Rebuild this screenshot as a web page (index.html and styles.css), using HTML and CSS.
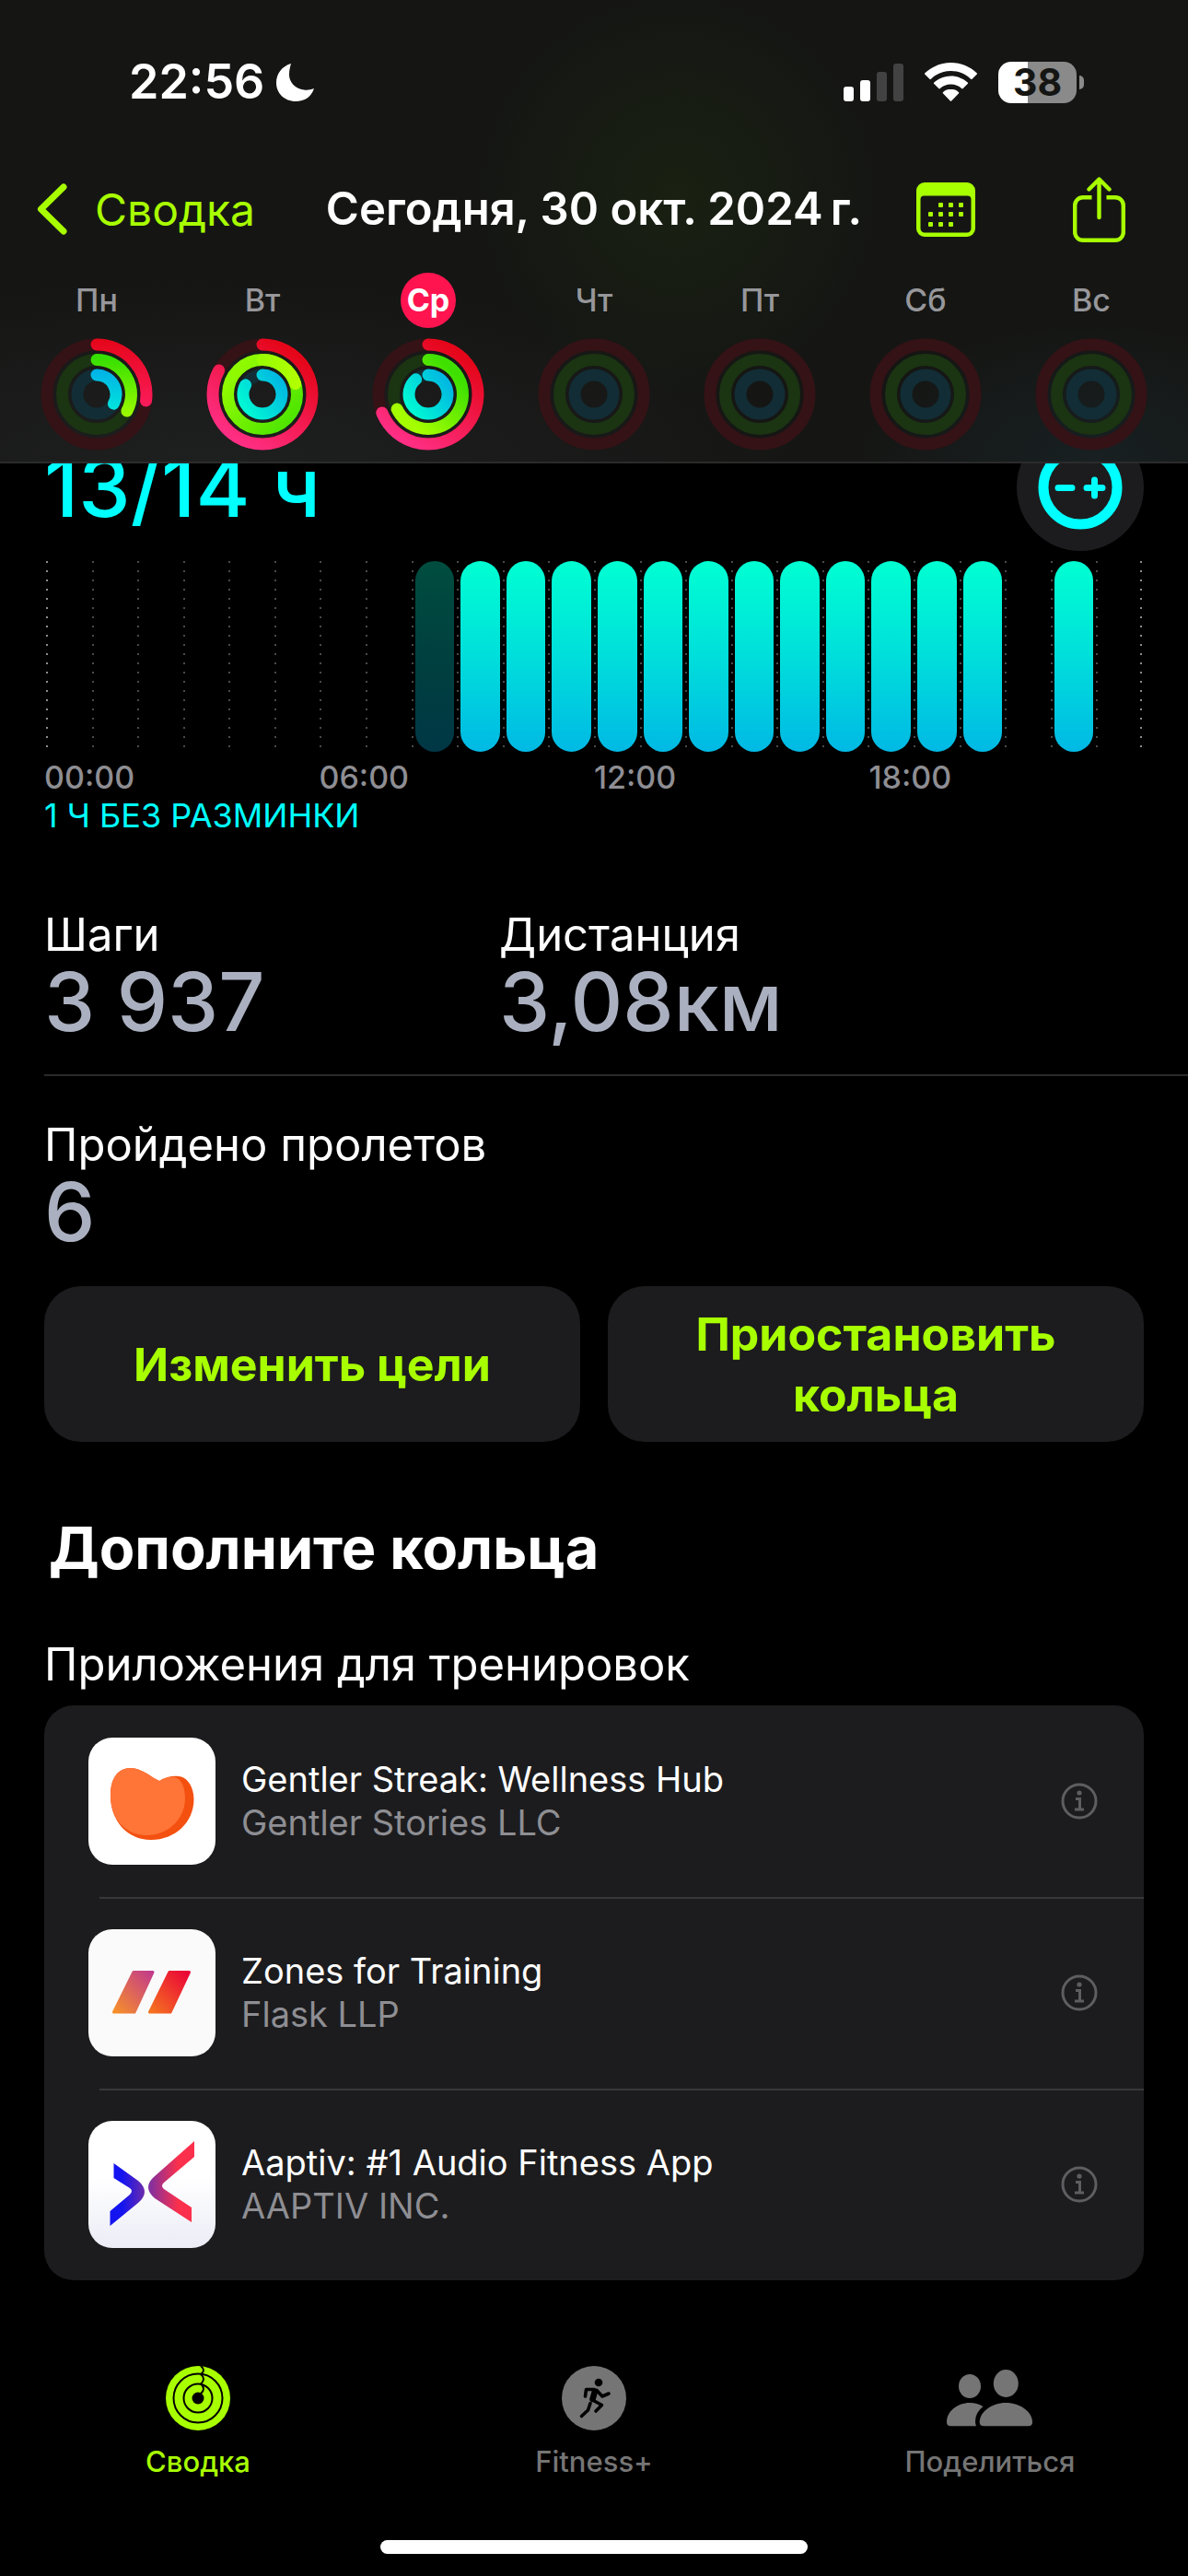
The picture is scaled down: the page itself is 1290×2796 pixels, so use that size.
FILE: index.html
```html
<!DOCTYPE html>
<html lang="ru">
<head>
<meta charset="utf-8">
<meta name="viewport" content="width=device-width, initial-scale=1">
<title>Сводка</title>
<link rel="stylesheet" href="styles.css">
</head>
<body>

<!-- Shared gradients and ring shapes -->
<svg class="defs" aria-hidden="true">
  <defs>
    <linearGradient id="move" gradientUnits="userSpaceOnUse" x1="25" y1="-50" x2="-40" y2="45">
      <stop offset="0" stop-color="#e5061a"/><stop offset="1" stop-color="#ff2f86"/>
    </linearGradient>
    <linearGradient id="move-short" gradientUnits="userSpaceOnUse" x1="0" y1="-60" x2="0" y2="14">
      <stop offset="0" stop-color="#e5061a"/><stop offset="1" stop-color="#fb1c5c"/>
    </linearGradient>
    <linearGradient id="exercise" gradientUnits="userSpaceOnUse" x1="20" y1="-30" x2="-30" y2="20">
      <stop offset="0" stop-color="#3fe000"/><stop offset="1" stop-color="#a6ff00"/>
    </linearGradient>
    <linearGradient id="exercise-short" gradientUnits="userSpaceOnUse" x1="0" y1="-40" x2="0" y2="24">
      <stop offset="0" stop-color="#36df00"/><stop offset="1" stop-color="#9dfb00"/>
    </linearGradient>
    <linearGradient id="exercise-lap" gradientUnits="userSpaceOnUse" x1="30" y1="30" x2="-30" y2="-20">
      <stop offset="0" stop-color="#4fe500"/><stop offset="1" stop-color="#8ff900"/>
    </linearGradient>
    <linearGradient id="exercise-over" gradientUnits="userSpaceOnUse" x1="0" y1="0" x2="38" y2="0">
      <stop offset="0" stop-color="#99fb00"/><stop offset="1" stop-color="#b2ff00"/>
    </linearGradient>
    <linearGradient id="stand" gradientUnits="userSpaceOnUse" x1="18" y1="-18" x2="-22" y2="10">
      <stop offset="0" stop-color="#00b8e2"/><stop offset="1" stop-color="#00f6d4"/>
    </linearGradient>
    <linearGradient id="stand-short" gradientUnits="userSpaceOnUse" x1="0" y1="-26" x2="0" y2="16">
      <stop offset="0" stop-color="#00b2e6"/><stop offset="1" stop-color="#00e3dc"/>
    </linearGradient>
    <linearGradient id="stripe-a" x1="1" y1="0" x2="0" y2="1">
      <stop offset="0" stop-color="#c23a8c"/><stop offset="1" stop-color="#f79028"/>
    </linearGradient>
    <linearGradient id="stripe-b" x1="1" y1="0" x2="0" y2="1">
      <stop offset="0" stop-color="#ea0238"/><stop offset="1" stop-color="#f5741f"/>
    </linearGradient>
    <linearGradient id="wing-a" x1="0" y1="0" x2="1" y2="0">
      <stop offset=".35" stop-color="#1414f0"/><stop offset="1" stop-color="#6b2cab"/>
    </linearGradient>
    <linearGradient id="wing-b" x1="0" y1="0" x2="1" y2="0">
      <stop offset="0" stop-color="#7a30a4"/><stop offset=".65" stop-color="#fb304c"/>
    </linearGradient>
    <path id="ring-l" d="M0-54A54 54 0 1 1-.01-54" pathLength="100"/>
    <path id="ring-m" d="M0-37.5A37.5 37.5 0 1 1-.01-37.5" pathLength="100"/>
    <path id="ring-s" d="M0-21A21 21 0 1 1-.01-21" pathLength="100"/>
    <g id="tracks">
      <circle r="54" stroke="#341216"/><circle r="37.5" stroke="#1b3412"/><circle r="21" stroke="#122d35"/>
    </g>
    <g id="info">
      <circle cx="20" cy="20" r="18" stroke-width="3"/>
      <circle cx="20" cy="11" r="2.6" fill="currentColor" stroke="none"/>
      <path d="M16 17.5h4.5v11.5M15 29h10" stroke-width="3"/>
    </g>
  </defs>
</svg>

<header class="header">
  <div class="status">
    <div class="status-group status-clock">
      <time>22:56</time>
      <svg class="moon" viewBox="0 0 41 41" aria-hidden="true"><path fill="#fff" d="M16 0C6 3 0 11 0 21c0 11 9 20 21 20 10 0 17-5 20-14-4 1.500-7 2-11 1.500C20 27 14 20 14 12c0-5 1-8 2-12z"/></svg>
    </div>
    <div class="status-group">
      <svg class="signal" viewBox="0 0 65 41" aria-hidden="true">
        <rect y="25" width="11" height="16" rx="3" fill="#fff"/><rect x="18" y="18" width="11" height="23" rx="3" fill="#fff"/>
        <rect x="36" y="9" width="11" height="32" rx="3" fill="#424242"/><rect x="54" width="11" height="41" rx="3" fill="#424242"/>
      </svg>
      <svg class="wifi" viewBox="0 0 57 42" aria-hidden="true">
        <g fill="#fff">
          <path d="M28.500 0C17.500 0 7.500 4.300.400 11.300a1 1 0 0 0 0 1.500l5 5a1 1 0 0 0 1.500 0C12.500 12.300 20 9 28.500 9s16 3.300 21.600 8.800a1 1 0 0 0 1.500 0l5-5a1 1 0 0 0 0-1.500C49.500 4.300 39.500 0 28.500 0z"/>
          <path d="M28.500 14.500c-7 0-13.400 2.700-18.200 7a1 1 0 0 0 0 1.500l5 5a1 1 0 0 0 1.500 0c3.100-2.800 7.200-4.500 11.700-4.500s8.600 1.700 11.700 4.500a1 1 0 0 0 1.500 0l5-5a1 1 0 0 0 0-1.500c-4.800-4.300-11.200-7-18.200-7z"/>
          <path d="M28.500 28.800c-3.200 0-6.200 1.200-8.400 3.200a1 1 0 0 0 0 1.500l7.700 8a1 1 0 0 0 1.400 0l7.700-8a1 1 0 0 0 0-1.500c-2.200-2-5.200-3.200-8.400-3.200z"/>
        </g>
      </svg>
      <div class="battery"><span class="battery-level">38</span><span class="battery-tip"></span></div>
    </div>
  </div>

  <div class="navbar">
    <a class="back" href="#summary">
      <svg class="chevron" viewBox="0 0 33 56" aria-hidden="true"><path d="M29 4 4.500 28 29 52" fill="none" stroke="currentColor" stroke-width="7" stroke-linecap="round" stroke-linejoin="round"/></svg>
      <span>Сводка</span>
    </a>
    <h1 class="title">Сегодня, 30 окт. 2024&#8201;г.</h1>
    <div class="actions">
      <button class="icon-button" type="button" aria-label="Календарь">
        <svg class="calendar" viewBox="0 0 64 59" aria-hidden="true">
          <path fill="currentColor" fill-rule="evenodd" d="M9 0h46a9 9 0 0 1 9 9v41a9 9 0 0 1-9 9H9a9 9 0 0 1-9-9V9a9 9 0 0 1 9-9zM8.500 14.500a4 4 0 0 0-4 4V50a4.500 4.500 0 0 0 4.500 4.500h46a4.500 4.500 0 0 0 4.500-4.500V18.500a4 4 0 0 0-4-4z"/>
          <g fill="currentColor">
            <rect x="24" y="22" width="5" height="5" rx="1"/><rect x="35" y="22" width="5" height="5" rx="1"/><rect x="46" y="22" width="5" height="5" rx="1"/>
            <rect x="13" y="32" width="5" height="5" rx="1"/><rect x="24" y="32" width="5" height="5" rx="1"/><rect x="35" y="32" width="5" height="5" rx="1"/><rect x="46" y="32" width="5" height="5" rx="1"/>
            <rect x="13" y="43" width="5" height="5" rx="1"/><rect x="24" y="43" width="5" height="5" rx="1"/><rect x="35" y="43" width="5" height="5" rx="1"/>
          </g>
        </svg>
      </button>
      <button class="icon-button" type="button" aria-label="Поделиться">
        <svg class="share" viewBox="0 0 57 71" fill="none" stroke="currentColor" stroke-width="4.4" stroke-linejoin="round" aria-hidden="true"><path d="M20.500 22.200H11A8.800 8.800 0 0 0 2.200 31v29A8.800 8.800 0 0 0 11 68.800h35a8.800 8.800 0 0 0 8.800-8.800V31a8.800 8.800 0 0 0-8.800-8.800h-9.500"/><path d="M28.500 3v41M17.500 13.500l11-11 11 11" stroke-linecap="round"/></svg>
      </button>
    </div>
  </div>

  <div class="week">
    <button class="day" type="button">
      <span class="day-name">Пн</span>
      <svg class="rings" viewBox="-61 -61 122 122" aria-hidden="true"><use href="#tracks"/>
        <use href="#ring-l" stroke="url(#move-short)" stroke-dasharray="27 100"/><use href="#ring-m" stroke="url(#exercise-short)" stroke-dasharray="33 100"/><use href="#ring-s" stroke="url(#stand-short)" stroke-dasharray="33 100"/></svg>
    </button>
    <button class="day" type="button">
      <span class="day-name">Вт</span>
      <svg class="rings" viewBox="-61 -61 122 122" aria-hidden="true"><use href="#tracks"/>
        <use href="#ring-l" stroke="url(#move)" stroke-dasharray="83 100"/><circle r="37.500" stroke="url(#exercise-lap)"/><use href="#ring-m" stroke="url(#exercise-over)" stroke-dasharray="20 100"/><use href="#ring-s" stroke="url(#stand)" stroke-dasharray="83 100"/></svg>
    </button>
    <button class="day" type="button" aria-current="date">
      <span class="day-name day-name-current">Ср</span>
      <svg class="rings" viewBox="-61 -61 122 122" aria-hidden="true"><use href="#tracks"/>
        <use href="#ring-l" stroke="url(#move)" stroke-dasharray="69 100"/><use href="#ring-m" stroke="url(#exercise)" stroke-dasharray="68 100"/><use href="#ring-s" stroke="url(#stand)" stroke-dasharray="89 100"/></svg>
    </button>
    <button class="day" type="button"><span class="day-name">Чт</span><svg class="rings" viewBox="-61 -61 122 122" aria-hidden="true"><use href="#tracks"/></svg></button>
    <button class="day" type="button"><span class="day-name">Пт</span><svg class="rings" viewBox="-61 -61 122 122" aria-hidden="true"><use href="#tracks"/></svg></button>
    <button class="day" type="button"><span class="day-name">Сб</span><svg class="rings" viewBox="-61 -61 122 122" aria-hidden="true"><use href="#tracks"/></svg></button>
    <button class="day" type="button"><span class="day-name">Вс</span><svg class="rings" viewBox="-61 -61 122 122" aria-hidden="true"><use href="#tracks"/></svg></button>
  </div>
</header>

<main class="content">
  <section class="stand">
    <div class="stand-head">
      <p class="stand-value">13/14 ч</p>
      <button class="goal-button" type="button" aria-label="Изменить цель">
        <svg viewBox="0 0 138 138" fill="none" stroke="#0ff" aria-hidden="true"><circle cx="69" cy="69" r="40" stroke-width="11"/><path d="M45 69.500h15M76 69.500h17M84.500 61v17" stroke-width="7" stroke-linecap="round"/></svg>
      </button>
    </div>
    <div class="chart">
      <i class="hour"></i><i class="hour"></i><i class="hour"></i><i class="hour"></i><i class="hour"></i><i class="hour"></i><i class="hour"></i><i class="hour"></i>
      <i class="hour"><b class="bar bar-idle"></b></i><i class="hour"><b class="bar"></b></i><i class="hour"><b class="bar"></b></i><i class="hour"><b class="bar"></b></i>
      <i class="hour"><b class="bar"></b></i><i class="hour"><b class="bar"></b></i><i class="hour"><b class="bar"></b></i><i class="hour"><b class="bar"></b></i>
      <i class="hour"><b class="bar"></b></i><i class="hour"><b class="bar"></b></i><i class="hour"><b class="bar"></b></i><i class="hour"><b class="bar"></b></i>
      <i class="hour"><b class="bar"></b></i><i class="hour"></i><i class="hour"><b class="bar"></b></i><i class="hour"></i>
    </div>
    <div class="axis"><span>00:00</span><span>06:00</span><span>12:00</span><span>18:00</span></div>
    <p class="stand-note">1 Ч БЕЗ РАЗМИНКИ</p>
  </section>

  <dl class="stats">
    <div class="stat"><dt>Шаги</dt><dd>3 937</dd></div>
    <div class="stat"><dt>Дистанция</dt><dd>3,08км</dd></div>
  </dl>
  <dl class="stats stats-last">
    <div class="stat"><dt>Пройдено пролетов</dt><dd>6</dd></div>
  </dl>

  <div class="goal-actions">
    <button class="pill" type="button">Изменить цели</button>
    <button class="pill" type="button">Приостановить кольца</button>
  </div>

  <section class="apps">
    <h2 class="apps-title">Дополните кольца</h2>
    <h3 class="apps-subtitle">Приложения для тренировок</h3>
    <ul class="card">
      <li class="app">
        <svg class="app-icon" viewBox="0 0 138 138" aria-hidden="true"><rect width="138" height="138" fill="#fff"/>
          <path fill="#f4500f" d="M77 47c7-4 14-6 21-5 10 1 16.500 12 16.500 25 0 25-20.500 44-46.500 44-26 0-44-21-44-48 0-19 8-30 22-30 12 0 22 10 31 14z"/>
          <path fill="#ff7437" d="M77 47c6-4 12-5.500 17-4 7 2 11 11 11 23 0 22-18 40-42 40-22 0-39-17-39-43 0-19 8-30 22-30 12 0 22 10 31 14z"/></svg>
        <div class="app-text"><span>Gentler Streak: Wellness Hub</span><span class="app-maker">Gentler Stories LLC</span></div>
        <button class="info-button" type="button" aria-label="Сведения о Gentler Streak"><svg viewBox="0 0 40 40" aria-hidden="true"><use href="#info"/></svg></button>
      </li>
      <li class="app">
        <svg class="app-icon" viewBox="0 0 138 138" aria-hidden="true"><rect width="138" height="138" fill="#fafafa"/>
          <path fill="url(#stripe-a)" stroke="url(#stripe-a)" stroke-width="3" stroke-linejoin="round" d="M49 46.500h21L50 90H27.500z"/>
          <path fill="url(#stripe-b)" stroke="url(#stripe-b)" stroke-width="3" stroke-linejoin="round" d="M88 46.500h21.500L89 90H66.500z"/></svg>
        <div class="app-text"><span>Zones for Training</span><span class="app-maker">Flask LLP</span></div>
        <button class="info-button" type="button" aria-label="Сведения о Zones"><svg viewBox="0 0 40 40" aria-hidden="true"><use href="#info"/></svg></button>
      </li>
      <li class="app">
        <svg class="app-icon app-icon-shaded" viewBox="0 0 138 138" aria-hidden="true">
          <path fill="url(#wing-a)" d="M27.500 46v16L45 73q4 3 0 7L23.500 98v16L54 89q14-12 0-24z"/>
          <path fill="url(#wing-b)" d="M115 22v17L82 67q-4 3.500 0 7l30 20v16L72 84q-14-12 0-24z"/></svg>
        <div class="app-text"><span>Aaptiv: #1 Audio Fitness App</span><span class="app-maker">AAPTIV INC.</span></div>
        <button class="info-button" type="button" aria-label="Сведения об Aaptiv"><svg viewBox="0 0 40 40" aria-hidden="true"><use href="#info"/></svg></button>
      </li>
    </ul>
  </section>
</main>

<footer class="footer">
  <nav class="tabs">
    <a class="tab tab-current" href="#summary" aria-current="page">
      <svg class="tab-icon" viewBox="0 0 70 70" aria-hidden="true"><circle cx="35" cy="35" r="35" fill="currentColor"/>
        <g fill="none" stroke="#000" stroke-width="2"><circle cx="35" cy="35" r="26.500"/><circle cx="35" cy="35" r="15.500"/><path d="M38 0q6 5 0 9M38 9q6 5 0 10.500M38 19.500q6 5 0 10.500"/></g>
        <circle cx="35" cy="35" r="6.500"/></svg>
      <span>Сводка</span>
    </a>
    <a class="tab" href="#fitness">
      <svg class="tab-icon" viewBox="0 0 70 70" aria-hidden="true"><circle cx="35" cy="35" r="35" fill="currentColor"/>
        <circle cx="40" cy="18" r="4.300"/>
        <g fill="none" stroke="#000" stroke-width="3.600" stroke-linecap="round" stroke-linejoin="round">
          <path d="M25.500 33l1-7.500H35M38 26.500l6 6.500 7-3M33.500 37l10 5.500-6.500 6.500M31 40.500l-2.500 7.500-7 6.500"/><path d="M36 27.500 33.500 36" stroke-width="6.500"/></g></svg>
      <span>Fitness+</span>
    </a>
    <a class="tab" href="#sharing">
      <svg class="tab-icon tab-icon-wide" viewBox="0 0 100 70" aria-hidden="true"><g fill="currentColor">
        <ellipse cx="28" cy="22" rx="12" ry="13"/><ellipse cx="67.300" cy="19" rx="13.500" ry="15"/>
        <path d="M35 65.300H7.500Q3 65.300 3 61c0-12 12-21 25-21q8 0 14.500 4Q34 50.500 34 60q0 3 1 5.300z"/>
        <path d="M43.500 65.300H91.500Q96 65.300 96 61C96 50 83 40 67.300 40S38.700 50 38.700 61q0 4.300 4.800 4.300z"/></g></svg>
      <span>Поделиться</span>
    </a>
  </nav>
  <div class="home-indicator"></div>
</footer>

</body>
</html>
```

FILE: styles.css
```css
:root {
  --lime: #a8ff00;
  --cyan: #00ffff;
  --surface: #1c1c1e;
  --grey: #8e8e93;
}

* {
  box-sizing: border-box;
}

body {
  margin: 0;
  min-height: 100vh;
  display: flex;
  flex-direction: column;
  background: #000;
  color: #fff;
  font-family: Inter, "Liberation Sans", sans-serif;
}

h1, h2, h3, p, dl, dd, ul {
  margin: 0;
  padding: 0;
}

button {
  padding: 0;
  border: 0;
  background: none;
  color: inherit;
  font: inherit;
  cursor: pointer;
}

a {
  color: inherit;
  text-decoration: none;
}

svg {
  display: block;
  flex: none;
}

.defs {
  position: absolute;
  width: 0;
  height: 0;
}

/* Header */

.header {
  position: sticky;
  top: 0;
  z-index: 1;
  padding: 62px 0 12px;
  border-bottom: 2px solid #2b2b2c;
  background:
    radial-gradient(circle 220px at 57% 42%, #192112, transparent),
    radial-gradient(ellipse 50% 40% at 18% 100%, #1e1f1f, transparent),
    radial-gradient(ellipse 20% 30% at 92% 100%, #182022, transparent),
    #151614;
}

.status {
  display: flex;
  justify-content: space-between;
  height: 54px;
  padding: 0 113px 0 140px;
}

.status-group {
  display: flex;
  align-items: center;
  gap: 23px;
}

.status-clock {
  gap: 13px;
  font-size: 52px;
  font-weight: 600;
  line-height: 54px;
}

.moon { width: 41px; height: 41px; }
.signal { width: 65px; height: 41px; }
.wifi { width: 57px; height: 42px; }

.battery {
  display: flex;
  align-items: center;
  gap: 3px;
}

.battery-level {
  width: 85px;
  border-radius: 14px;
  background: linear-gradient(90deg, #fff 38%, #8a8a8a 38%);
  color: #151614;
  font-size: 41px;
  font-weight: 700;
  line-height: 45px;
  text-align: center;
}

.battery-tip {
  width: 5px;
  height: 15px;
  border-radius: 0 6px 6px 0;
  background: #8a8a8a;
}

.navbar {
  display: grid;
  grid-template-columns: 1fr auto 1fr;
  align-items: center;
  height: 72px;
  margin-top: 75px;
}

.back {
  display: flex;
  align-items: center;
  gap: 30px;
  padding-left: 40px;
  color: var(--lime);
  font-size: 48px;
}

.chevron { width: 33px; height: 56px; }

.title {
  font-size: 49px;
  font-weight: 600;
  line-height: 72px;
  white-space: nowrap;
}

.actions {
  display: flex;
  align-items: center;
  justify-content: flex-end;
  gap: 106px;
  padding-right: 68px;
}

.icon-button { color: var(--lime); }
.calendar { width: 64px; height: 59px; }
.share { width: 57px; height: 71px; }

.week {
  display: grid;
  grid-template-columns: repeat(7, 1fr);
  margin-top: 33px;
  padding: 0 15px;
}

.day {
  display: flex;
  flex-direction: column;
  align-items: center;
  gap: 11px;
}

.day-name {
  width: 60px;
  color: #97979b;
  font-size: 34px;
  font-weight: 500;
  line-height: 60px;
  text-align: center;
}

.day-name-current {
  border-radius: 50%;
  background: #ff1450;
  color: #fff;
  font-weight: 700;
}

.rings {
  width: 122px;
  height: 122px;
  fill: none;
  stroke-width: 13px;
  stroke-linecap: round;
}

/* Stand hours */

.content {
  flex: 1;
  margin-top: -43px;
  padding: 0 48px 38px;
}

.stand-head {
  display: flex;
  align-items: center;
  justify-content: space-between;
}

.stand-value {
  color: var(--cyan);
  font-size: 90px;
  font-weight: 500;
  line-height: 84px;
}

.goal-button {
  width: 138px;
  height: 138px;
  border-radius: 50%;
  background: var(--surface);
}

.chart {
  display: grid;
  grid-template-columns: repeat(24, 1fr);
  height: 207px;
  margin: 11px 2px 0;
}

.hour {
  padding: 0 3px 0 4px;
  background: repeating-linear-gradient(#4a4a4a 0 2px, transparent 2px 10px) 0 0 / 2px 100% no-repeat;
}

.hour:first-child {
  background: repeating-linear-gradient(#8c8c8c 0 2px, transparent 2px 10px) 0 0 / 2px 100% no-repeat;
}

.hour:last-child {
  background:
    repeating-linear-gradient(#4a4a4a 0 2px, transparent 2px 10px) 0 0 / 2px 100% no-repeat,
    repeating-linear-gradient(#8c8c8c 0 2px, transparent 2px 10px) 100% 0 / 2px 100% no-repeat;
}

.bar {
  display: block;
  height: 100%;
  border-radius: 22px;
  background: linear-gradient(#00ffd2, #00e2da 45%, #00b9e4);
}

.bar-idle {
  background: linear-gradient(#004d3f, #00403f 50%, #003745);
}

.axis {
  display: grid;
  grid-template-columns: repeat(4, 1fr);
  margin-top: 6px;
  color: var(--grey);
  font-size: 34px;
  font-weight: 500;
  line-height: 44px;
}

.stand-note {
  color: var(--cyan);
  font-size: 36px;
  line-height: 38px;
}

/* Stats */

.stats {
  display: grid;
  grid-template-columns: 494px 1fr;
  margin-right: -48px;
  padding: 81px 0 37px;
  border-bottom: 2px solid #2a2a2c;
}

.stats-last {
  grid-template-columns: 1fr;
  padding: 45px 0 0;
  border: 0;
}

.stat dt {
  font-size: 49px;
  line-height: 60px;
}

.stat dd {
  color: #abb0c0;
  font-size: 88px;
  font-weight: 500;
  line-height: 84px;
}

/* Goal buttons */

.goal-actions {
  display: grid;
  grid-template-columns: 1fr 1fr;
  gap: 30px;
  margin-top: 39px;
}

.pill {
  min-height: 169px;
  padding: 18px 48px;
  border-radius: 40px;
  background: var(--surface);
  color: var(--lime);
  font-size: 50px;
  font-weight: 700;
  line-height: 66px;
}

/* Apps */

.apps-title {
  margin-top: 75px;
  padding-left: 5px;
  font-size: 63px;
  font-weight: 700;
  line-height: 80px;
}

.apps-subtitle {
  margin-top: 57px;
  font-size: 49px;
  font-weight: 400;
  line-height: 60px;
}

.card {
  margin-top: 14px;
  border-radius: 32px;
  background: var(--surface);
  list-style: none;
}

.app {
  display: flex;
  align-items: center;
  gap: 28px;
  height: 208px;
  padding: 0 50px 0 48px;
}

.app + .app {
  background: linear-gradient(#38383a, #38383a) 60px 0 / 100% 2px no-repeat;
}

.app-icon {
  width: 138px;
  height: 138px;
  border-radius: 26px;
}

.app-icon-shaded {
  background: linear-gradient(#fff 45%, #ebecf6);
}

.app-text {
  flex: 1;
  display: flex;
  flex-direction: column;
  font-size: 38px;
  line-height: 47px;
}

.app-maker {
  color: var(--grey);
}

.info-button {
  width: 40px;
  height: 40px;
  color: #5e5e62;
  fill: none;
  stroke: currentColor;
}

/* Tab bar */

.footer {
  position: sticky;
  bottom: 0;
  padding: 53px 0 24px;
  background: #000;
}

.tabs {
  display: grid;
  grid-template-columns: repeat(3, 1fr);
}

.tab {
  display: flex;
  flex-direction: column;
  align-items: center;
  gap: 14px;
  color: #757575;
  font-size: 31px;
  font-weight: 500;
  line-height: 40px;
}

.tab-current { color: var(--lime); }
.tab-icon { width: 70px; height: 70px; }
.tab-icon-wide { width: 100px; }

.home-indicator {
  width: 36%;
  height: 15px;
  margin: 65px auto 0;
  border-radius: 8px;
  background: #fff;
}
```
